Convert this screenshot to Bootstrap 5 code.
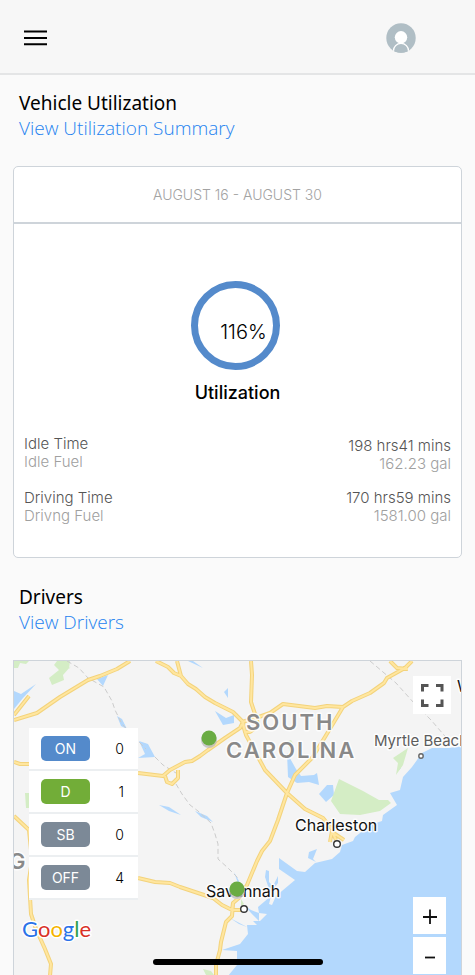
<!DOCTYPE html>
<html lang="en">
<head>
<meta charset="utf-8">
<meta name="viewport" content="width=device-width, initial-scale=1">
<title>Vehicle Utilization</title>
<link href="https://cdn.jsdelivr.net/npm/bootstrap@5.3.0/dist/css/bootstrap.min.css" rel="stylesheet">
<style>
  body { background: #fafafa; color: #000; font-family: Inter, "Liberation Sans", sans-serif; font-size: 15px; line-height: 18px; }
  .topbar { background: #f7f7f7; border-bottom: 2px solid #e4e5e6; height: 75px; padding: 2px 59px 0 23px; }
  .icon-btn { background: none; border: 0; padding: 0; line-height: 0; }
  .section-head { font-family: "Noto Sans", "Open Sans", sans-serif; font-size: 19px; line-height: 25px; padding: 16px 19px 25px; }
  .section-head h2 { font-size: 19px; line-height: 25px; font-weight: 400; margin: 0; }
  .section-head a { color: #2583f0; text-decoration: none; font-family: "Open Sans", "Noto Sans", sans-serif; font-weight: 300; }
  .section-head.drivers-head { padding-top: 27px; }
  .panel { background: #fff; border: 1px solid #ced4da; border-radius: 5px; margin: 0 13px; }
  .period { height: 57px; border-bottom: 2px solid #ced4da; color: #a3a3a3; font-size: 14px; font-weight: 300; }
  .gauge { width: 89px; height: 89px; border: 7px solid #548acb; border-radius: 50%; font-size: 20px; font-weight: 300; padding: 12px 0 0 16px; margin: 57px 4px 0 0; }
  .gauge-title { font-size: 18px; line-height: 24px; font-weight: 500; margin: 11px 0 30px; }
  .stats { color: #555; font-weight: 300; padding: 0 10px 32px; }
  .stats .fuel { color: #a0a0a0; }
  .stats .names { display: grid; gap: 17px; }
  .stats .values { display: grid; gap: 16px; padding-top: 2px; }
  .map { margin: 0 13px; border: 1px solid #ced4da; border-bottom: 0; background: #f4f4f4; min-height: 315px; }
  .map-art { inset: 0; }
  .status-list { left: 15px; top: 67px; width: 109px; font-weight: 300; font-size: 14px; }
  .status-list li { height: 43px; background: #fff; border-bottom: 2px solid #eceff1; padding: 0 14px 0 12px; }
  .status-tag { width: 49px; height: 25px; line-height: 25px; border-radius: 5px; color: #fff; text-align: center; font-weight: 400; font-size: 14px; }
  .tag-on { background: #548acb; }
  .tag-d { background: #72ad38; }
  .tag-off { background: #7c8997; }
  .map-btn { background: #fff; border: 0; padding: 0; width: 33px; height: 37px; }
  .btn-full { right: 10px; top: 15px; width: 38px; height: 38px; }
  .zoom-btns { right: 15px; top: 236px; gap: 3px; }
  .home-bar { left: 50%; margin-left: -85px; bottom: 10px; width: 170px; height: 6px; border-radius: 3px; background: #000; z-index: 10; }
</style>
<script src="https://cdn.jsdelivr.net/npm/bootstrap@5.3.0/dist/js/bootstrap.bundle.min.js"></script>
</head>
<body>
<div class="min-vh-100 d-flex flex-column">
  <header class="topbar d-flex align-items-center justify-content-between">
    <button class="icon-btn" type="button" aria-label="Menu">
      <svg width="24" height="18" viewBox="0 0 24 18"><path d="M1 2.5h23M1 9h23M1 15.3h23" stroke="#000" stroke-width="2"/></svg>
    </button>
    <button class="icon-btn" type="button" aria-label="Account">
      <svg width="30" height="30" viewBox="0 0 30 30"><defs><clipPath id="disc"><circle cx="15" cy="15" r="14.7"/></clipPath></defs><g clip-path="url(#disc)"><path d="M0 0h30v30H0z" fill="#b0bec5"/><circle cx="15" cy="28" r="7.6" fill="#b0bec5" stroke="#fff" stroke-width="1.4"/><circle cx="15" cy="14.3" r="6.2" fill="#fff"/></g></svg>
    </button>
  </header>
  <main class="flex-grow-1 d-flex flex-column">
    <div class="section-head">
      <h2>Vehicle Utilization</h2>
      <a href="#summary">View Utilization Summary</a>
    </div>
    <section class="panel" id="summary">
      <div class="period d-flex align-items-center justify-content-center">AUGUST 16 - AUGUST 30</div>
      <div class="d-flex flex-column align-items-center">
        <div class="gauge d-flex align-items-center justify-content-center text-nowrap"><span>116%</span></div>
        <div class="gauge-title">Utilization</div>
      </div>
      <div class="stats d-flex justify-content-between">
        <div class="names">
          <div><div>Idle Time</div><div class="fuel">Idle Fuel</div></div>
          <div><div>Driving Time</div><div class="fuel">Drivng Fuel</div></div>
        </div>
        <div class="values text-end">
          <div><div>198 hrs41 mins</div><div class="fuel">162.23 gal</div></div>
          <div><div>170 hrs59 mins</div><div class="fuel">1581.00 gal</div></div>
        </div>
      </div>
    </section>
    <div class="section-head drivers-head">
      <h2>Drivers</h2>
      <a href="#map">View Drivers</a>
    </div>
    <section class="map position-relative flex-grow-1 overflow-hidden" id="map">
      <svg class="map-art position-absolute w-100 h-100" viewBox="14 661 447 314" preserveAspectRatio="xMidYMin slice" font-family="Inter, 'Liberation Sans', sans-serif">
        <!-- ocean -->
        <path fill="#b3d8fd" d="M462 746L449 748 432 748 422 753 412 767 403 777 400 790 390 793 397 805 383 815 382 821 370 825 355 837 353 841 342 845 340 852 332 859 315 863 305 872 297 871 279 858 279 869 295 880 276 896 272 905 269 904 271 896 258 907 259 913 267 914 260 921 253 921 257 925 247 925 248 934 240 944 222 950 237 951 237 965 228 976H462z"/>
        <!-- lakes and inlets -->
        <g fill="#b3d8fd">
          <path d="M14 691l7 3 15-10-13 14-9 11zM97 679l11-4-5 11zM188 661h5l10 7zM224 692l4-4v10zM215 711l11 7 8-3v8l-11 2zM117 716l5 3 5 10-6-3zM139 741l9 3 7 13-17 1 7-4zM159 805l10 2 12 8-12-4zM195 811l12 5 6 6-12-5zM287 753l9 16 5 7 13-1 3-2 2 12-10-3-12 1-9-6zM319 794l8-9h6l1 10-8 7zM336 800l8 0-6 4zM398 759l3-2v11l-2 2zM266 870l3 1v11l4 4 5-10v7l-6 8 1 6-5-11-3-9zM309 852l8-3-4 10 3 3-8-4zM234 872l5 9v5zM244 905l7 5 8 3v8l-8-8zM230 918l17 9-8-3z"/>
        </g>
        <!-- parks -->
        <g fill="#d4edc5">
          <path d="M14 661h15l-3 3-6-1-2 5h-4zM54 665l3-4h13l-1 8 2-3-8 9 1 5-12 5-3-7 10-8zM339 779l24 12 16 9h9l3 3-11 8-20 4-20-1-9-13zM393 758l15-10-5 17-7 10 2-12zM284 743l7-3 3 5-4 8-2-8zM25 793h4v15h-3zM241 899l3 5-3 2zM203 969l8 2 3 4h-8z"/>
        </g>
        <g fill="none" stroke="#cccccc" stroke-width="1" stroke-dasharray="5 3">
          <path d="M67 661l12 7 9 10 16 9 8 14 3 9 7 14 16 17 8 8M155 757l8 8 13 8M176 784l6 10 8 11 8 6 13 12 4 11 3 10v15l10 9 10 10M370 661l26 22 18 20 17 17 19 22"/>
        </g>
        <!-- road casing and fill -->
        <defs>
          <path id="roads" d="M14 720l23-7 23-16 28-17 12-4 17-7 13-8M14 715l15-19M156 661l12 6 6 6 7 3M177 661l4 15M181 676l7 8 8 5 9 8 10 6 18 9 9 9M251 661l1 14-1 27 4 12M242 722l14-4 14-5 13-9 32 4 12-2 16 1 9-6 18-8 14-10 3-5 18-10 7-7M390 661l7 7 11 1M343 707l-18 30-13 21-17 17-8 18-9 27-8 21-8 10-5 10-10 24-7 12-7 6-1 7M242 722l4 13 12 22 7 13 22 23 18 16 18 9 9 11M330 842l2-11 4 9M332 832l12 8M236 715l7 7-3 6-15 10-17 12-8 6-8 5-7 1-15 8-7 6-25-3M243 722l2 10 5 0 8-6-2-12M165 776l2 6 5 2 6-6v-8M14 762l6 2h10M14 816l15 14 3 30-3 20 2 34 5 15 9 20 6 15-1 12M138 878l17 4 15 1 10 4 15 5 18 6 9 7 10 5h12M233 904l-1 12-6 6-2 8-3 12-1 8-4 15v12"/>
        </defs>
        <g fill="none" stroke-linejoin="round">
          <use href="#roads" stroke="#f3d37c" stroke-width="4"/>
          <use href="#roads" stroke="#ffe69f" stroke-width="2"/>
        </g>
        <g paint-order="stroke" stroke="#fff" stroke-width="3" stroke-linejoin="round" stroke-opacity=".85">
          <g font-size="22" font-weight="600" fill="#898989" letter-spacing="2">
            <text x="246" y="730">SOUTH</text>
            <text x="226" y="758">CAROLINA</text>
            <text x="9" y="869">G</text>
          </g>
          <g font-size="16" font-weight="400">
            <text x="374" y="746" fill="#5c5c5c" font-size="15">Myrtle Beach</text>
            <text x="457" y="692" fill="#111">W</text>
            <text x="295" y="831" fill="#111">Charleston</text>
            <text x="206" y="897" fill="#111">Savannah</text>
          </g>
        </g>
        <g fill="#fff" stroke="#333" stroke-width="1.4"><circle cx="337" cy="844" r="3.3"/><circle cx="244" cy="909" r="3.3"/><circle cx="421" cy="756" r="2.2" stroke="#666"/></g>
        <g fill="#bbb" opacity=".8"><circle cx="209" cy="740" r="8"/><circle cx="237" cy="891" r="8"/></g>
        <g fill="#6aac43"><circle cx="209" cy="738" r="7.5"/><circle cx="237" cy="889" r="7.5"/></g>
        <text x="22" y="937" font-family="Lato, sans-serif" font-size="22" font-weight="400" paint-order="stroke" stroke="#fff" stroke-width="3" stroke-linejoin="round"><tspan fill="#2a72e8">G</tspan><tspan fill="#d93025">o</tspan><tspan fill="#f5b400">o</tspan><tspan fill="#2a72e8">g</tspan><tspan fill="#2f9e4f">l</tspan><tspan fill="#d93025">e</tspan></text>
      </svg>
      <ul class="status-list list-unstyled position-absolute mb-0">
        <li class="d-flex align-items-center justify-content-between"><span class="status-tag tag-on">ON</span><span>0</span></li>
        <li class="d-flex align-items-center justify-content-between"><span class="status-tag tag-d">D</span><span>1</span></li>
        <li class="d-flex align-items-center justify-content-between"><span class="status-tag tag-off">SB</span><span>0</span></li>
        <li class="d-flex align-items-center justify-content-between"><span class="status-tag tag-off">OFF</span><span>4</span></li>
      </ul>
      <button class="map-btn btn-full position-absolute d-flex align-items-center justify-content-center" type="button" aria-label="Toggle fullscreen">
        <svg width="24" height="24" viewBox="0 0 24 24" fill="none" stroke="#555" stroke-width="3"><path d="M2.5 8.5v-6h6M16 2.5h6v6M22 16.5v6h-6M8.5 22.5h-6v-6"/></svg>
      </button>
      <div class="zoom-btns position-absolute d-flex flex-column">
        <button class="map-btn d-flex align-items-center justify-content-center" type="button" aria-label="Zoom in"><svg width="16" height="16" viewBox="0 0 16 16"><path d="M1 9h14M8 1.5v15" stroke="#111" stroke-width="1.8"/></svg></button>
        <button class="map-btn d-flex align-items-center justify-content-center" type="button" aria-label="Zoom out"><svg width="16" height="16" viewBox="0 0 16 16"><path d="M3 9.5h10" stroke="#111" stroke-width="1.8"/></svg></button>
      </div>
    </section>
  </main>
</div>
<div class="home-bar position-fixed"></div>
</body>
</html>
